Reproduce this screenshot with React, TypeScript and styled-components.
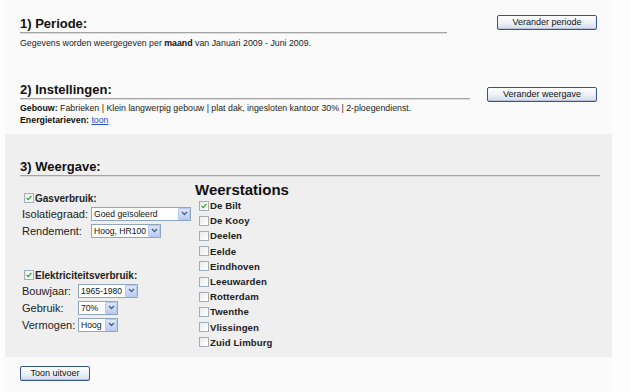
import styled, { createGlobalStyle } from 'styled-components';

const GlobalStyle = createGlobalStyle`
  body {
    margin: 0;
    background: #fdfdfd;
    font-family: "Liberation Sans", Arial, sans-serif;
    color: #111;
  }
`;

const Page = styled.div`
  margin-left: 5px;
  width: 607px;
  min-height: 392px;
  background: #fafafa;
`;

const Section = styled.div<{ $top: number }>`
  padding: ${(p) => p.$top}px 15px 0 15px;
`;

const GreySection = styled.div`
  margin-top: 8px;
  padding: 25px 15px 7px 15px;
  background: #efefef;
`;

const HeadRow = styled.div`
  display: flex;
  align-items: flex-start;
`;

const Title = styled.h2<{ $width: number }>`
  margin: 0;
  width: ${(p) => p.$width}px;
  font-size: 13px;
  line-height: 16px;
  font-weight: bold;
  color: #111;
  border-bottom: 1px solid #a4a4a4;
  box-shadow: 0 1px 0 #dedede;
`;

const Button = styled.button<{ $width: number; $offset?: number }>`
  display: block;
  width: ${(p) => p.$width}px;
  height: 15px;
  margin-top: ${(p) => p.$offset ?? 0}px;
  padding: 0;
  border: 1px solid #35548f;
  border-radius: 2px;
  background: linear-gradient(#ffffff, #eef1f7 50%, #d3dbea);
  box-shadow: inset 0 -1px 0 #b8c4dc;
  font-family: "Liberation Sans", Arial, sans-serif;
  font-size: 9px;
  line-height: 13px;
  color: #111;
`;

const RightButton = styled(Button)`
  margin-left: auto;
`;

const Para = styled.p<{ $gap: number }>`
  margin: ${(p) => p.$gap}px 0 0 0;
  font-size: 8.8px;
  line-height: 12px;
  color: #222;

  b {
    color: #111;
  }

  a {
    color: #2353c4;
  }
`;

const Columns = styled.div`
  display: flex;
  margin-top: 5px;
`;

const LeftCol = styled.div`
  width: 173px;
  padding: 10px 0 0 2px;
`;

const Group = styled.div<{ $gap?: number }>`
  margin-top: ${(p) => p.$gap ?? 0}px;
`;

const CheckRow = styled.div`
  display: flex;
  align-items: center;
  gap: 1px;
  height: 14px;
  padding-left: 2px;
  font-size: 10px;
  font-weight: bold;
  color: #222;
`;

const FieldRow = styled.div`
  display: flex;
  align-items: center;
  height: 17px;
`;

const FieldLabel = styled.span<{ $width: number }>`
  width: ${(p) => p.$width}px;
  font-size: 11px;
  color: #222;
`;

const SelectBox = styled.div<{ $width: number }>`
  display: flex;
  width: ${(p) => p.$width}px;
  height: 14px;
  box-sizing: border-box;
  border: 1px solid #8fa6c2;
  background: #fff;
`;

const SelectValue = styled.span`
  flex: 1;
  padding-left: 2px;
  font-size: 8.6px;
  line-height: 12px;
  color: #111;
  white-space: nowrap;
  overflow: hidden;
`;

const SelectArrow = styled.span`
  display: flex;
  align-items: center;
  justify-content: center;
  flex: none;
  width: 12px;
  box-sizing: border-box;
  border: 1px solid #b6c8ee;
  border-radius: 1px;
  background: linear-gradient(#dde7fb, #bccdf4);
`;

const StationCol = styled.div`
  flex: 1;
`;

const StationTitle = styled.h3`
  margin: 0;
  font-size: 15px;
  line-height: 17px;
  font-weight: bold;
  color: #111;
`;

const StationRow = styled.div`
  display: flex;
  align-items: center;
  gap: 1px;
  height: 15.2px;
  padding-left: 4px;
  font-size: 9.6px;
  font-weight: bold;
  letter-spacing: 0.1px;
  color: #222;
`;

const BoxMark = styled.span`
  display: inline-flex;
  align-items: center;
  justify-content: center;
  flex: none;
  width: 10px;
  height: 10px;
  box-sizing: border-box;
  border: 1px solid #a3adb7;
  background: linear-gradient(135deg, #ececec, #ffffff);
`;

const Footer = styled.div`
  padding: 9px 15px 0 15px;
`;

function Check({ on }: { on?: boolean }) {
  return (
    <BoxMark>
      {on && (
        <svg width="6" height="6" viewBox="0 0 6 6">
          <path d="M0.6 3 L2.2 4.6 L5.4 1" fill="none" stroke="#2aa629" strokeWidth="1.2" />
        </svg>
      )}
    </BoxMark>
  );
}

function Select({ value, width }: { value: string; width: number }) {
  return (
    <SelectBox $width={width}>
      <SelectValue>{value}</SelectValue>
      <SelectArrow>
        <svg width="7" height="5" viewBox="0 0 7 5">
          <path d="M1 1 L3.5 3.5 L6 1" fill="none" stroke="#4d6185" strokeWidth="1.4" />
        </svg>
      </SelectArrow>
    </SelectBox>
  );
}

const stations = [
  'De Bilt',
  'De Kooy',
  'Deelen',
  'Eelde',
  'Eindhoven',
  'Leeuwarden',
  'Rotterdam',
  'Twenthe',
  'Vlissingen',
  'Zuid Limburg',
];

function App() {
  return (
    <Page>
      <GlobalStyle />

      <Section $top={16}>
        <HeadRow>
          <Title $width={427}>1) Periode:</Title>
          <RightButton $width={100} $offset={-1}>Verander periode</RightButton>
        </HeadRow>
        <Para $gap={4}>
          Gegevens worden weergegeven per <b>maand</b> van Januari 2009 - Juni 2009.
        </Para>
      </Section>

      <Section $top={33}>
        <HeadRow>
          <Title $width={450}>2) Instellingen:</Title>
          <RightButton $width={110} $offset={5}>Verander weergave</RightButton>
        </HeadRow>
        <Para $gap={0}>
          <b>Gebouw:</b> Fabrieken | Klein langwerpig gebouw | plat dak, ingesloten kantoor 30% | 2-ploegendienst.
          <br />
          <b>Energietarieven:</b> <a href="#">toon</a>
        </Para>
      </Section>

      <GreySection>
        <Title $width={580}>3) Weergave:</Title>
        <Columns>
          <LeftCol>
            <Group>
              <CheckRow>
                <Check on />
                Gasverbruik:
              </CheckRow>
              <FieldRow>
                <FieldLabel $width={69}>Isolatiegraad:</FieldLabel>
                <Select value="Goed geïsoleerd" width={100} />
              </FieldRow>
              <FieldRow>
                <FieldLabel $width={69}>Rendement:</FieldLabel>
                <Select value="Hoog, HR100" width={70} />
              </FieldRow>
            </Group>

            <Group $gap={29}>
              <CheckRow>
                <Check on />
                Elektriciteitsverbruik:
              </CheckRow>
              <FieldRow>
                <FieldLabel $width={56}>Bouwjaar:</FieldLabel>
                <Select value="1965-1980" width={60} />
              </FieldRow>
              <FieldRow>
                <FieldLabel $width={56}>Gebruik:</FieldLabel>
                <Select value="70%" width={40} />
              </FieldRow>
              <FieldRow>
                <FieldLabel $width={56}>Vermogen:</FieldLabel>
                <Select value="Hoog" width={40} />
              </FieldRow>
            </Group>
          </LeftCol>

          <StationCol>
            <StationTitle>Weerstations</StationTitle>
            {stations.map((name, i) => (
              <StationRow key={name}>
                <Check on={i === 0} />
                {name}
              </StationRow>
            ))}
          </StationCol>
        </Columns>
      </GreySection>

      <Footer>
        <Button $width={70}>Toon uitvoer</Button>
      </Footer>
    </Page>
  );
}

export default App;
